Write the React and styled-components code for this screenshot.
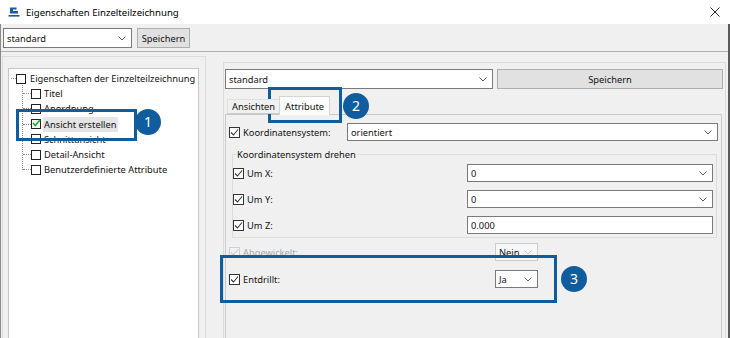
import React from "react";
import styled, { createGlobalStyle } from "styled-components";

const Global = createGlobalStyle`
  html, body { margin: 0; padding: 0; background: #f0f0f0; }
  body { font-family: "Noto Sans", "Open Sans", sans-serif; font-size: 9.3px; color: #111; }
`;

const BLUE = "#0f5d9e";

const Window = styled.div`
  position: relative;
  width: 730px;
  height: 338px;
  overflow: hidden;
  background: #f0f0f0;
  display: flex;
  flex-direction: column;
`;

const TitleBar = styled.div`
  height: 24px;
  flex: none;
  background: #fff;
  display: flex;
  align-items: center;
  padding-left: 8px;
  gap: 6px;
  font-size: 9.6px;
  color: #000;
`;

const Close = styled.div`
  margin-left: auto;
  width: 30px;
  height: 24px;
  display: flex;
  align-items: center;
  justify-content: center;
`;

const Frame = styled.div`
  flex: 1;
  display: flex;
  flex-direction: column;
  border-left: 1px solid #8a8a8a;
  border-right: 2px solid #5a5a5a;
  min-height: 0;
`;

const Toolbar = styled.div`
  height: 28px;
  flex: none;
  display: flex;
  align-items: flex-start;
  padding: 4px 0 0 2px;
  box-sizing: border-box;
  gap: 5px;
  border-bottom: 1px solid #b0b0b0;
`;

const Body = styled.div`
  flex: 1;
  display: flex;
  align-items: flex-start;
  padding-top: 4px;
`;

const LeftPanel = styled.div`
  margin-left: 1px;
  width: 204px;
  height: 320px;
  box-sizing: border-box;
  border: 1px solid #dcdcdc;
  padding: 11px 6px 0 5px;
  flex: none;
`;

const TreeBox = styled.div`
  background: #fff;
  border: 1px solid #c6c6c6;
  height: 300px;
  padding-top: 2px;
  box-sizing: border-box;
`;

const TreeRow = styled.div`
  display: flex;
  align-items: center;
  height: 15.2px;
  padding-left: ${(p) => (p.$root ? 2 : 0)}px;
`;

const Connector = styled.span`
  width: ${(p) => p.$w}px;
  border-top: 1px dotted #8c8c8c;
  flex: none;
`;

const TreeChildren = styled.div`
  position: relative;
  margin-left: 13px;
  padding-left: 1px;
  &::before {
    content: "";
    position: absolute;
    left: 0;
    top: -1px;
    bottom: 7px;
    border-left: 1px dotted #8c8c8c;
  }
`;

const TreeLabel = styled.span`
  margin-left: ${(p) => p.$gap}px;
  padding: 0 2px 0 1px;
  line-height: 15px;
  background: ${(p) => (p.$selected ? "#e5e5e5" : "transparent")};
  white-space: nowrap;
`;

const TreeBoxCheck = styled.span`
  width: 8px;
  height: 8px;
  border: 1px solid #222;
  background: #fff;
  flex: none;
  position: relative;
`;

const RightPanel = styled.div`
  margin-left: 17px;
  margin-top: 6px;
  width: 503px;
  height: 320px;
  box-sizing: border-box;
  border: 1px solid #dcdcdc;
  padding: 6px 2px 0 1px;
  flex: none;
`;

const HeaderRow = styled.div`
  display: flex;
  gap: 4px;
`;

const SelectBox = styled.div`
  width: ${(p) => (p.$w ? p.$w + "px" : "auto")};
  flex: ${(p) => (p.$w ? "none" : 1)};
  height: ${(p) => p.$h || 18}px;
  box-sizing: border-box;
  border: 1px solid ${(p) => (p.$disabled ? "#cccccc" : "#7a7a7a")};
  background: ${(p) => (p.$disabled ? "#f7f7f7" : "#fff")};
  display: flex;
  align-items: center;
  padding: 0 5px 0 3px;
  color: #111;
`;

const SelectText = styled.span`
  flex: 1;
  white-space: nowrap;
`;

const Button = styled.div`
  width: ${(p) => (p.$w ? p.$w + "px" : "auto")};
  flex: ${(p) => (p.$w ? "none" : 1)};
  height: ${(p) => p.$h || 20}px;
  box-sizing: border-box;
  border: 1px solid #adadad;
  background: #e1e1e1;
  display: flex;
  align-items: center;
  justify-content: center;
  color: #111;
`;

const TabStrip = styled.div`
  display: flex;
  align-items: flex-end;
  height: 18px;
  margin: 7px 0 0 2px;
  position: relative;
  z-index: 1;
`;

const Tab = styled.div`
  box-sizing: border-box;
  height: ${(p) => (p.$active ? 19 : 15)}px;
  margin-bottom: ${(p) => (p.$active ? -1 : 0)}px;
  padding: 0 ${(p) => (p.$active ? 5 : 4)}px;
  display: flex;
  align-items: center;
  background: ${(p) => (p.$active ? "#fcfcfc" : "#f0f0f0")};
  border: 1px solid ${(p) => (p.$active ? "#d4d4d4" : "#e0e0e0")};
  border-bottom: ${(p) => (p.$active ? "none" : "1px solid #cacaca")};
  ${(p) => (p.$active ? "" : "border-right: none;")}
`;

const TabPanel = styled.div`
  border: 1px solid #cacaca;
  margin-right: 1px;
  height: 240px;
  padding: 8px 3px 0 3px;
  box-sizing: border-box;
`;

const FieldRow = styled.div`
  display: grid;
  grid-template-columns: ${(p) => p.$label}px ${(p) => (p.$select ? p.$select + "px" : "1fr")};
  align-items: center;
  height: ${(p) => p.$h || 18}px;
  margin-top: ${(p) => p.$mt || 0}px;
`;

const CheckLabel = styled.label`
  display: flex;
  align-items: center;
  gap: 3px;
  color: ${(p) => (p.$disabled ? "#a8a8a8" : "#111")};
  white-space: nowrap;
`;

const Box = styled.span`
  width: 11px;
  height: 11px;
  box-sizing: border-box;
  border: 1px solid ${(p) => (p.$disabled ? "#cfcfcf" : "#333")};
  background: ${(p) => (p.$disabled ? "#f2f2f2" : "#fff")};
  display: flex;
  align-items: center;
  justify-content: center;
  flex: none;
`;

const Group = styled.fieldset`
  margin: 7px 1px 0 3px;
  padding: 3px 3px 3px 0;
  border: 1px solid #dcdcdc;
  display: flex;
  flex-direction: column;
  gap: 8px;
  min-width: 0;
`;

const Legend = styled.legend`
  padding: 0 1px;
  margin-left: 3px;
  line-height: 13px;
`;

const Mark = styled.div`
  position: absolute;
  left: ${(p) => p.$x}px;
  top: ${(p) => p.$y}px;
  width: ${(p) => p.$w}px;
  height: ${(p) => p.$h}px;
  box-sizing: border-box;
  border: 3px solid ${BLUE};
  pointer-events: none;
`;

const Badge = styled.div`
  position: absolute;
  left: ${(p) => p.$x - 13}px;
  top: ${(p) => p.$y - 13}px;
  width: 26px;
  height: 26px;
  border-radius: 50%;
  background: ${BLUE};
  color: #fff;
  font-size: 14px;
  display: flex;
  align-items: center;
  justify-content: center;
  line-height: 1;
`;

function Chevron({ color = "#5a5a5a" }) {
  return (
    <svg width="8" height="5" viewBox="0 0 8 5">
      <polyline points="0.5,0.5 4,4 7.5,0.5" fill="none" stroke={color} strokeWidth="1" />
    </svg>
  );
}

function Select({ value, w, h, disabled }) {
  return (
    <SelectBox $w={w} $h={h} $disabled={disabled}>
      <SelectText>{value}</SelectText>
      <Chevron color={disabled ? "#c4c4c4" : "#5a5a5a"} />
    </SelectBox>
  );
}

function Check({ disabled }) {
  const c = disabled ? "#c8c8c8" : "#333";
  return (
    <Box $disabled={disabled}>
      <svg width="9" height="9" viewBox="0 0 9 9">
        <polyline points="1,4.5 3.5,7 8,1.5" fill="none" stroke={c} strokeWidth="1.1" />
      </svg>
    </Box>
  );
}

function CheckField({ label, disabled }) {
  return (
    <CheckLabel $disabled={disabled}>
      <Check disabled={disabled} />
      {label}
    </CheckLabel>
  );
}

function TreeCheck({ checked }) {
  return (
    <TreeBoxCheck>
      {checked && (
        <svg width="9" height="8" viewBox="0 0 9 8" style={{ position: "absolute", left: 0, top: -1 }}>
          <polyline points="1,4 3.3,6.5 8,1" fill="none" stroke="#22b422" strokeWidth="1.8" />
        </svg>
      )}
    </TreeBoxCheck>
  );
}

function AppIcon() {
  return (
    <svg width="12" height="10" viewBox="0 0 12 10">
      <path d="M2 0.5 H8.5 V2.5 H5 V4 H10 V6.5 H2 Z" fill="#1c5aa3" />
      <rect x="0.5" y="8" width="11" height="1.6" fill="#1c5aa3" />
    </svg>
  );
}

const items = [
  { label: "Titel" },
  { label: "Anordnung" },
  { label: "Ansicht erstellen", checked: true, selected: true },
  { label: "Schnittansicht" },
  { label: "Detail-Ansicht" },
  { label: "Benutzerdefinierte Attribute" },
];

export default function App() {
  return (
    <Window>
      <Global />
      <TitleBar>
        <AppIcon />
        <span>Eigenschaften Einzelteilzeichnung</span>
        <Close>
          <svg width="10" height="10" viewBox="0 0 10 10">
            <path d="M0.5 0.5 L9.5 9.5 M9.5 0.5 L0.5 9.5" stroke="#222" strokeWidth="1" />
          </svg>
        </Close>
      </TitleBar>
      <Frame>
        <Toolbar>
          <Select value="standard" w={129} h={20} />
          <Button $w={53}>Speichern</Button>
        </Toolbar>
        <Body>
          <LeftPanel>
            <TreeBox>
              <TreeRow $root>
                <Connector $w={5} />
                <TreeCheck />
                <TreeLabel $gap={3}>Eigenschaften der Einzelteilzeichnung</TreeLabel>
              </TreeRow>
              <TreeChildren>
                {items.map((it) => (
                  <TreeRow key={it.label}>
                    <Connector $w={8} />
                    <TreeCheck checked={it.checked} />
                    <TreeLabel $gap={2} $selected={it.selected}>
                      {it.label}
                    </TreeLabel>
                  </TreeRow>
                ))}
              </TreeChildren>
            </TreeBox>
          </LeftPanel>
          <RightPanel>
            <HeaderRow>
              <Select value="standard" w={268} h={20} />
              <Button $h={20}>Speichern</Button>
            </HeaderRow>
            <TabStrip>
              <Tab>Ansichten</Tab>
              <Tab $active>Attribute</Tab>
            </TabStrip>
            <TabPanel>
              <FieldRow $label={118}>
                <CheckField label="Koordinatensystem:" />
                <Select value="orientiert" />
              </FieldRow>
              <Group>
                <Legend>Koordinatensystem drehen</Legend>
                <FieldRow $label={234}>
                  <CheckField label="Um X:" />
                  <Select value="0" />
                </FieldRow>
                <FieldRow $label={234}>
                  <CheckField label="Um Y:" />
                  <Select value="0" />
                </FieldRow>
                <FieldRow $label={234}>
                  <CheckField label="Um Z:" />
                  <SelectBox>
                    <SelectText>0.000</SelectText>
                  </SelectBox>
                </FieldRow>
              </Group>
              <FieldRow $label={266} $select={43} $mt={5}>
                <CheckField label="Abgewickelt:" disabled />
                <Select value="Nein" w={43} disabled />
              </FieldRow>
              <FieldRow $label={266} $select={43} $mt={9}>
                <CheckField label="Entdrillt:" />
                <Select value="Ja" w={43} />
              </FieldRow>
            </TabPanel>
          </RightPanel>
        </Body>
      </Frame>

      <Mark $x={16} $y={109} $w={121} $h={32} />
      <Badge $x={148} $y={122}>1</Badge>
      <Mark $x={268} $y={87} $w={74} $h={36} />
      <Badge $x={356} $y={106}>2</Badge>
      <Mark $x={220} $y={255} $w={337} $h={48} />
      <Badge $x={574} $y={279}>3</Badge>
    </Window>
  );
}
